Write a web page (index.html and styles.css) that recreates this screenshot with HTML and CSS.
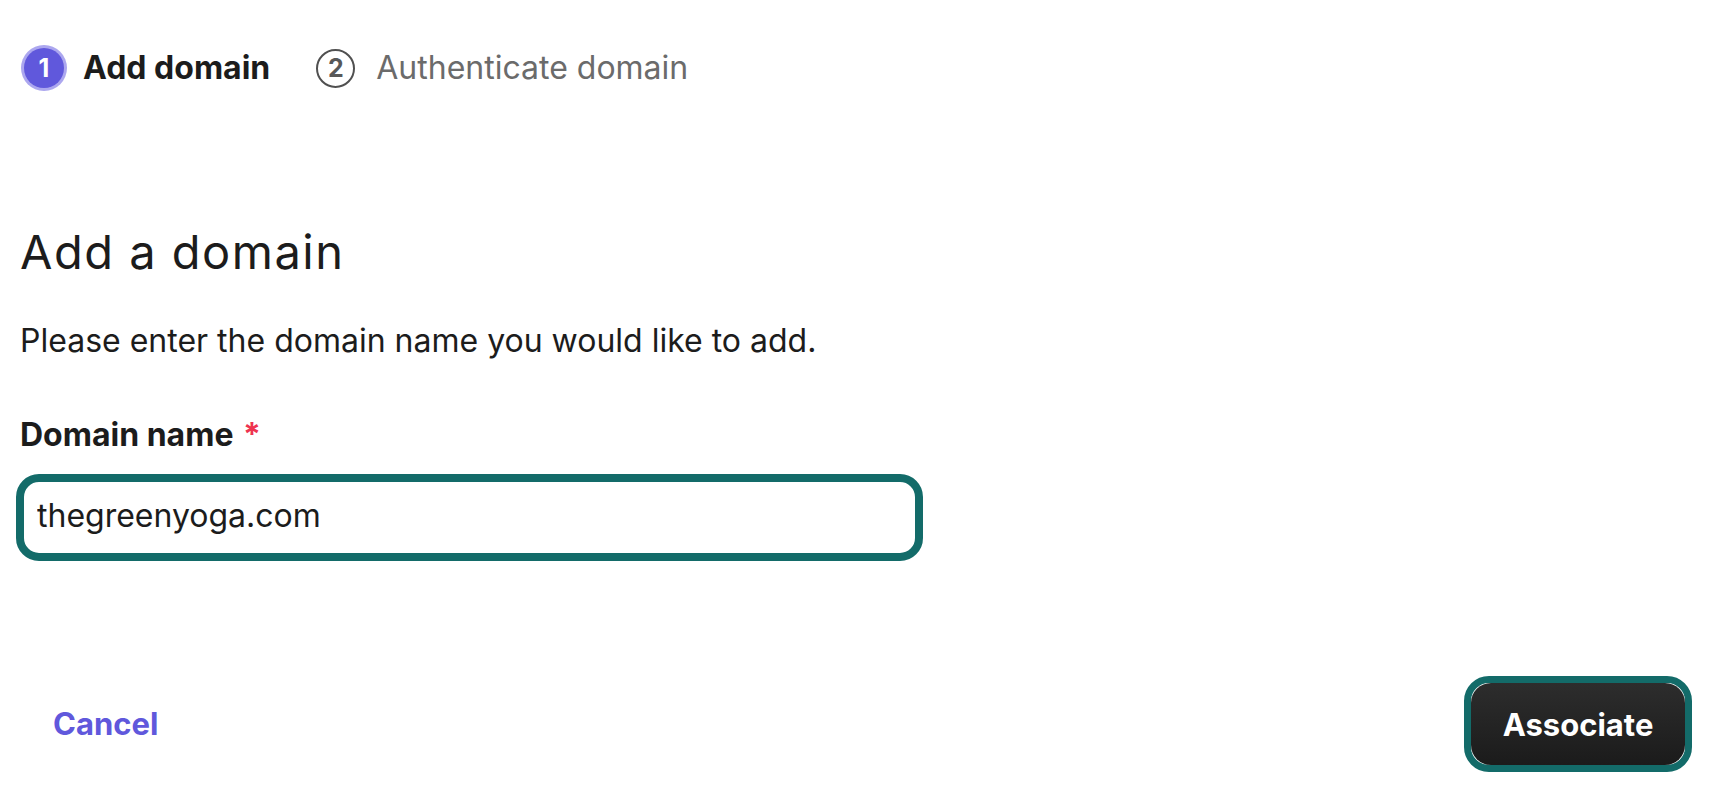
FILE: index.html
```html
<!DOCTYPE html>
<html lang="en">
<head>
<meta charset="utf-8">
<title>Add domain</title>
<link rel="stylesheet" href="styles.css">
</head>
<body>
<div class="page">
  <ol class="stepper">
    <li class="step step-active"><span class="step-num">1</span><span class="step-label">Add domain</span></li>
    <li class="step step-next"><span class="step-num">2</span><span class="step-label">Authenticate domain</span></li>
  </ol>

  <h1 class="title">Add a domain</h1>
  <p class="desc">Please enter the domain name you would like to add.</p>

  <label class="field-label" for="domain">Domain name <span class="req">*</span></label>
  <div class="field">
    <input id="domain" class="field-input" type="text" value="thegreenyoga.com">
  </div>

  <div class="footer">
    <button class="btn-cancel" type="button">Cancel</button>
    <span class="btn-ring"><button class="btn-primary" type="button">Associate</button></span>
  </div>
</div>
</body>
</html>
```

FILE: styles.css
```css
* { box-sizing: border-box; }

html, body {
  margin: 0;
  padding: 0;
  background: #ffffff;
}

body {
  font-family: Inter, "Noto Sans", "Liberation Sans", sans-serif;
  color: #1c1c1c;
  width: 1720px;
  height: 792px;
  overflow: hidden;
}

.page {
  padding: 45px 28px 0 20px;
  display: flex;
  flex-direction: column;
}

.stepper {
  list-style: none;
  margin: 0;
  padding: 0;
  display: flex;
  align-items: center;
  height: 46px;
}

.step {
  display: flex;
  align-items: center;
  font-size: 32px;
  line-height: 46px;
}

.step-num {
  display: flex;
  align-items: center;
  justify-content: center;
  border-radius: 50%;
  font-weight: 700;
  font-size: 25px;
  line-height: 1;
}

.step-active .step-num {
  width: 40px;
  height: 40px;
  margin-left: 4px;
  background: #6058dc;
  color: #ffffff;
  box-shadow: 0 0 0 3px #aca7ef;
}

.step-active .step-label {
  margin-left: 19px;
  font-weight: 700;
  color: #1c1c1c;
}

.step-next {
  margin-left: 46px;
}

.step-next .step-num {
  width: 39px;
  height: 39px;
  border: 2.5px solid #505050;
  color: #585858;
}

.step-next .step-label {
  margin-left: 21px;
  color: #6b6b6b;
}

.title {
  margin: 133px 0 0 0;
  font-size: 47px;
  line-height: 56px;
  font-weight: 400;
  letter-spacing: 1.5px;
  color: #1c1c1c;
}

.desc {
  margin: 41px 0 0 0;
  font-size: 32px;
  line-height: 40px;
  color: #1c1c1c;
}

.field-label {
  margin-top: 54px;
  font-size: 32px;
  line-height: 40px;
  font-weight: 700;
  color: #1c1c1c;
}

.req {
  color: #ee3450;
  margin-left: 2px;
}

.field {
  margin: 19px 0 0 -4px;
  width: 907px;
}

.field-input {
  display: block;
  width: 100%;
  height: 87px;
  margin: 0;
  padding: 0 12px 4px 13px;
  border: 8px solid #136b69;
  border-radius: 23px;
  font-family: Inter, "Noto Sans", "Liberation Sans", sans-serif;
  font-size: 32px;
  color: #1c1c1c;
  background: #ffffff;
  outline: none;
}

.footer {
  margin-top: 115px;
  display: flex;
  align-items: center;
  justify-content: space-between;
}

.btn-cancel {
  margin: 0 0 0 33px;
  padding: 0;
  border: 0;
  background: none;
  font-family: Inter, "Noto Sans", "Liberation Sans", sans-serif;
  font-size: 31px;
  line-height: 40px;
  font-weight: 700;
  color: #6058dc;
  cursor: pointer;
}

.btn-ring {
  display: inline-flex;
  border: 7px solid #136b69;
  border-radius: 25px;
}

.btn-primary {
  width: 214px;
  height: 82px;
  margin: 0;
  padding: 0;
  border: 0;
  border-radius: 20px;
  background: linear-gradient(#2d2d2d, #1b1b1b);
  color: #ffffff;
  font-family: Inter, "Noto Sans", "Liberation Sans", sans-serif;
  font-size: 31px;
  font-weight: 700;
  line-height: 1;
  cursor: pointer;
}
```
